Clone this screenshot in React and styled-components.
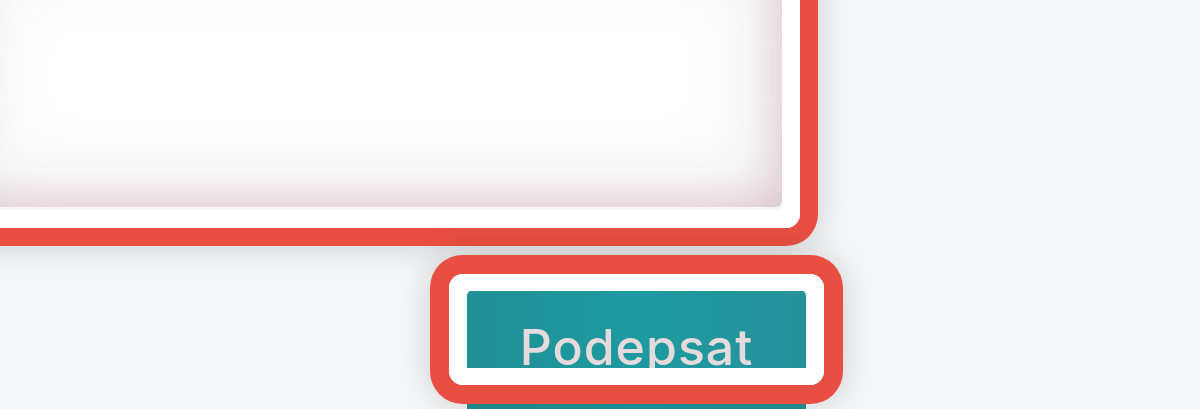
import styled, { createGlobalStyle } from "styled-components";

const GlobalStyle = createGlobalStyle`
  html, body {
    margin: 0;
    padding: 0;
    background: #f5f6f8;
    overflow: hidden;
  }
  * {
    box-sizing: border-box;
  }
`;

const Page = styled.div`
  width: 1200px;
  height: 409px;
  overflow: hidden;
  font-family: Inter, "Noto Sans", sans-serif;
`;

const Form = styled.form`
  display: flex;
  flex-direction: column;
  align-items: flex-end;
  gap: 83px;
  width: 822px;
  margin: -60px 0 0 -40px;
`;

const FieldWrap = styled.div`
  position: relative;
  width: 100%;
  height: 267px;
`;

const Field = styled.textarea`
  display: block;
  width: 100%;
  height: 100%;
  border: none;
  outline: none;
  resize: none;
  border-radius: 6px;
  background: #ffffff;
  box-shadow: inset 0 0 90px 6px rgba(120, 120, 130, 0.16),
    inset 0 0 45px 4px rgba(200, 130, 135, 0.38);
`;

// red annotation ring drawn over the element it marks
const Mark = styled.span`
  position: absolute;
  top: ${(p) => p.$top}px;
  right: ${(p) => p.$right}px;
  bottom: ${(p) => p.$bottom}px;
  left: ${(p) => p.$left}px;
  border: ${(p) => p.$white}px solid #ffffff;
  border-radius: ${(p) => p.$radius}px;
  box-shadow: 0 0 0 ${(p) => p.$red}px #e84f42,
    0 0 34px ${(p) => p.$red}px rgba(0, 0, 0, 0.16);
  pointer-events: none;
`;

const Submit = styled.button`
  position: relative;
  display: flex;
  justify-content: center;
  align-items: flex-start;
  width: 339px;
  height: 140px;
  margin-right: -24px;
  padding: 32px 0 0;
  border: none;
  border-radius: 6px;
  background: linear-gradient(90deg, #218f96 0%, #1d9aa0 50%, #25919a 100%);
  color: #e5dbdc;
  font-family: Inter, "Noto Sans", sans-serif;
  font-size: 50px;
  font-weight: 500;
  line-height: 1;
  letter-spacing: 1px;
  cursor: pointer;
`;

function App() {
  return (
    <Page>
      <GlobalStyle />
      <Form onSubmit={(e) => e.preventDefault()}>
        <FieldWrap>
          <Field readOnly />
          <Mark $top={-18} $right={-18} $bottom={-21} $left={-18} $white={18} $red={18} $radius={14} />
        </FieldWrap>
        <Submit type="submit">
          Podepsat
          <Mark $top={-16} $right={-18} $bottom={45} $left={-18} $white={17} $red={19} $radius={14} />
        </Submit>
      </Form>
    </Page>
  );
}

export default App;
